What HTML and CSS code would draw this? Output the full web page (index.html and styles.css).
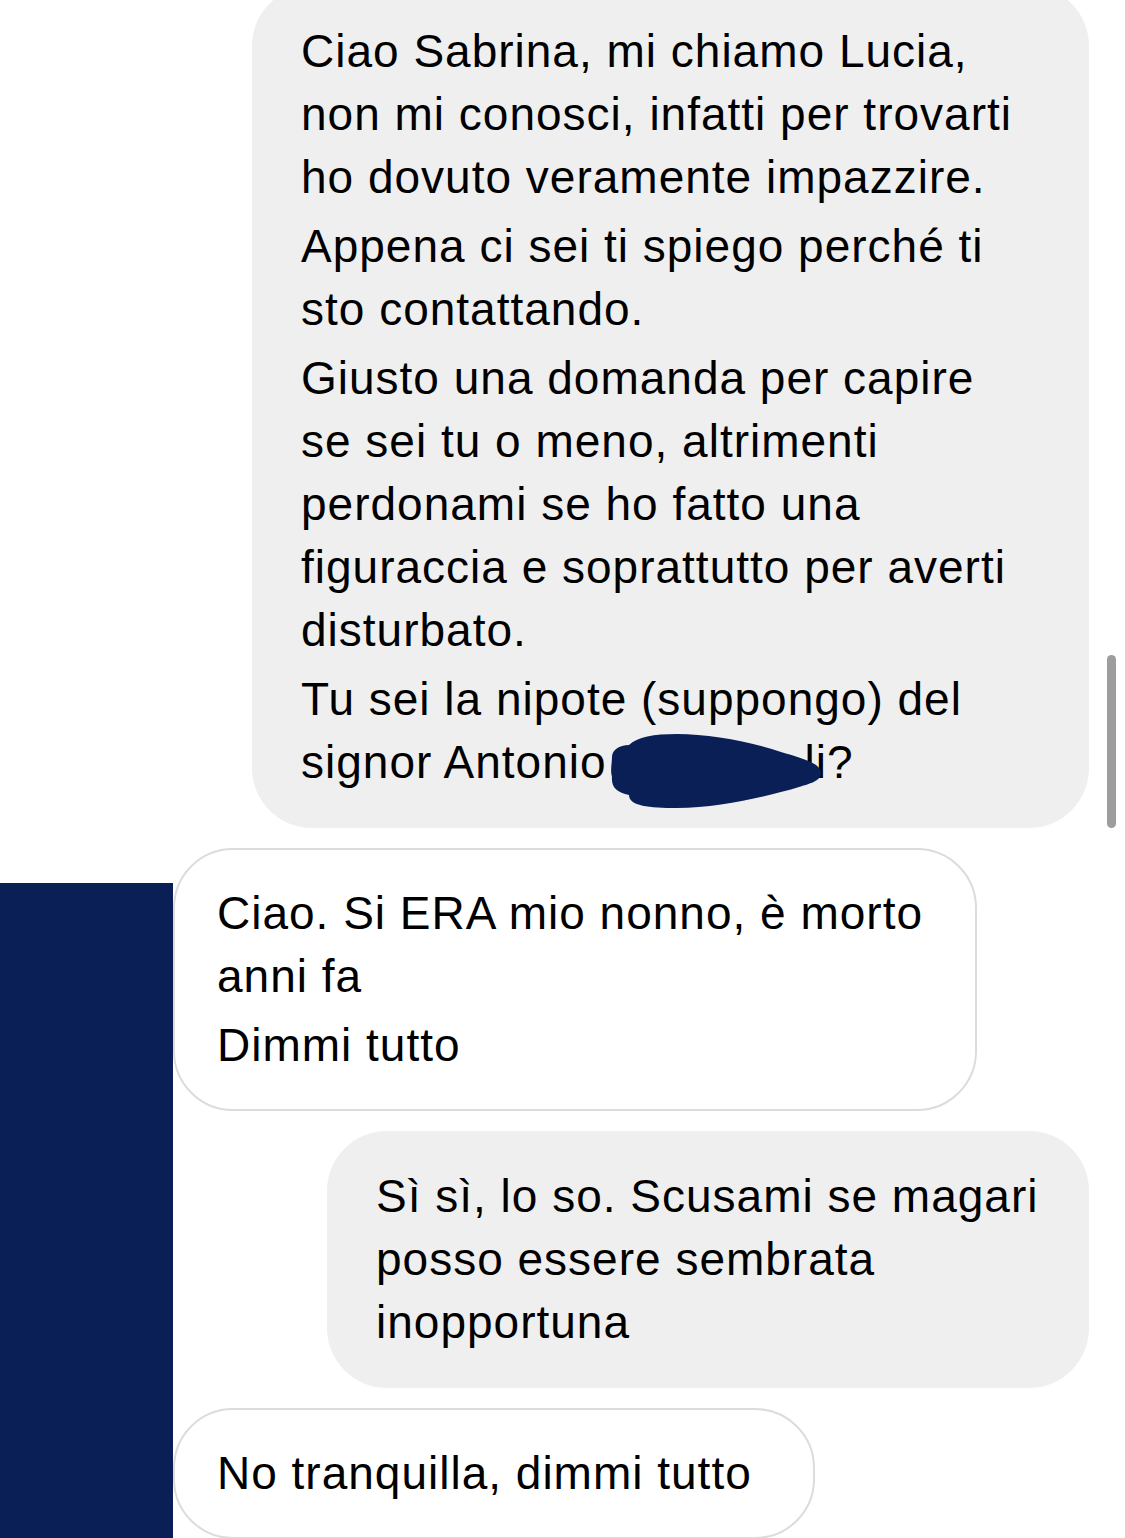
FILE: index.html
```html
<!DOCTYPE html>
<html lang="it">
<head>
    <meta charset="UTF-8">
    <meta name="viewport" content="width=device-width, initial-scale=1.0">
    <title>Messaggi</title>
    <link rel="stylesheet" href="styles.css">
</head>
<body>
    <div class="page">
        <!-- riquadro che copre l'avatar -->
        <div class="avatar-cover"></div>

        <div class="chat">
            <div class="row mine">
                <div class="bubble bubble-first">
                    <p>Ciao Sabrina, mi chiamo Lucia,<br>non mi conosci, infatti per trovarti<br>ho dovuto veramente impazzire.</p>
                    <p>Appena ci sei ti spiego perché ti<br>sto contattando.</p>
                    <p>Giusto una domanda per capire<br>se sei tu o meno, altrimenti<br>perdonami se ho fatto una<br>figuraccia e soprattutto per averti<br>disturbato.</p>
                    <p>Tu sei la nipote (suppongo) del<br>signor Antonio<span class="redact"><svg class="blob" width="214" height="78" viewBox="0 0 214 78"><path d="M3 24 C3 17 10 12 20 12 C28 4 45 1 68 1 C100 1 140 8 172 19 C192 25 212 30 212 40 C212 48 200 51 190 54 C160 63 110 75 68 75 C40 75 20 73 20 62 C8 60 2 54 3 44 C1 38 3 30 3 24 Z"/></svg></span>li?</p>
                </div>
            </div>

            <div class="row theirs">
                <div class="bubble bubble-reply">
                    <p>Ciao. Si ERA mio nonno, è morto<br>anni fa</p>
                    <p>Dimmi tutto</p>
                </div>
            </div>

            <div class="row mine">
                <div class="bubble bubble-sorry">
                    <p>Sì sì, lo so. Scusami se magari<br>posso essere sembrata<br>inopportuna</p>
                </div>
            </div>

            <div class="row theirs">
                <div class="bubble bubble-last">
                    <p>No tranquilla, dimmi tutto</p>
                </div>
            </div>
        </div>

        <div class="scrollbar"></div>
    </div>
</body>
</html>
```

FILE: styles.css
```css
body {
    margin: 0;
    padding: 0;
    background-color: #fff;
    font-family: "Liberation Sans", Arial, sans-serif;
    color: #000;
}
.page {
    position: relative;
    height: 1538px;
    overflow: hidden;
}
.avatar-cover {
    position: absolute;
    left: 0;
    top: 883px;
    bottom: 0;
    width: 173px;
    background-color: #0b1f57;
}
.chat {
    display: flex;
    flex-direction: column;
    gap: 20px;
    margin-top: -14px;
    padding-right: 36px;
}
.row {
    display: flex;
}
.row.mine {
    justify-content: flex-end;
}
.row.theirs {
    padding-left: 173px;
}
.bubble {
    box-sizing: border-box;
    border-radius: 60px;
    padding: 34px 30px 34px 49px;
    font-size: 46px;
    line-height: 63px;
    letter-spacing: 1px;
}
.bubble p {
    margin: 0;
}
.bubble p + p {
    margin-top: 6px;
}
.mine .bubble {
    background-color: #efefef;
}
.theirs .bubble {
    background-color: #fff;
    border: 2px solid #dcdcdc;
    padding: 32px 30px 32px 42px;
}
.bubble-first {
    width: 837px;
}
.bubble-reply {
    width: 804px;
}
.bubble-sorry {
    width: 762px;
}
.bubble-last {
    width: 642px;
}
.redact {
    position: relative;
    display: inline-block;
    width: 198px;
    height: 0;
}
.blob {
    position: absolute;
    left: 2px;
    top: -45px;
    fill: #0b1f57;
}
.scrollbar {
    position: absolute;
    left: 1107px;
    top: 655px;
    width: 9px;
    height: 173px;
    border-radius: 5px;
    background-color: #9d9d9d;
}
```
